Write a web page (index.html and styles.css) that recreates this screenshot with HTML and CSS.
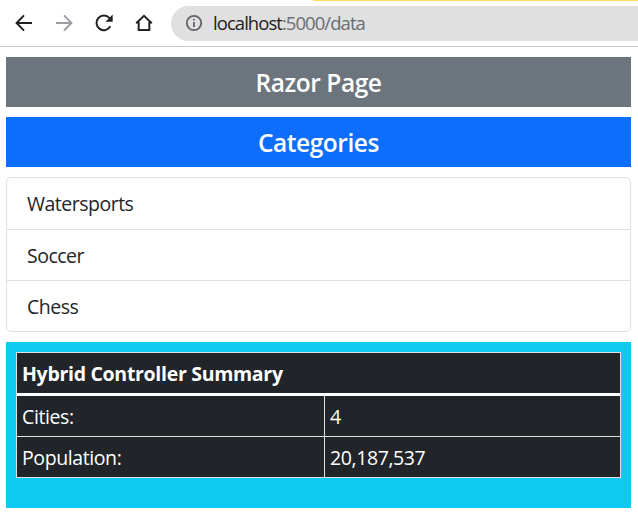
FILE: index.html
```html
<!DOCTYPE html>
<html lang="en">
<head>
<meta charset="utf-8">
<title>Razor Page</title>
<link rel="stylesheet" href="styles.css">
</head>
<body>
<header class="toolbar">
  <svg class="icon" viewBox="0 0 24 24"><path d="M20 12H5M12 4.4L4.6 12l7.4 7.6"/></svg>
  <svg class="icon muted" viewBox="0 0 24 24"><path d="M4 12h15M12 4.4l7.4 7.6-7.4 7.6"/></svg>
  <svg class="icon" viewBox="0 0 24 24"><path d="M18.3 15.2A7.3 7.3 0 1 1 17.4 7.2"/><path class="solid" d="M20.7 3.5v7.2h-7.2z"/></svg>
  <svg class="icon" viewBox="0 0 24 24"><path d="M4.2 12.2L12 4.8l7.8 7.4M6.7 11v8.1h10.6V11"/></svg>
  <div class="address">
    <svg class="info" viewBox="0 0 18 18"><circle cx="9" cy="9" r="7.2"/><path d="M9 8v5M9 4.8v1.8"/></svg>
    <span class="url">localhost<span class="path">:5000/data</span></span>
  </div>
  <div class="tab-line"></div>
</header>
<main>
  <h4 class="banner secondary">Razor Page</h4>
  <h4 class="banner primary">Categories</h4>
  <ul class="list">
    <li>Watersports</li>
    <li>Soccer</li>
    <li>Chess</li>
  </ul>
  <section class="summary">
    <table>
      <colgroup><col class="label-col"><col></colgroup>
      <thead><tr><th colspan="2">Hybrid Controller Summary</th></tr></thead>
      <tbody>
        <tr><td>Cities:</td><td>4</td></tr>
        <tr><td>Population:</td><td>20,187,537</td></tr>
      </tbody>
    </table>
  </section>
</main>
</body>
</html>
```
FILE: styles.css
```css
* { box-sizing: border-box; }
body {
  margin: 0;
  background: #fff;
  color: #212529;
  font: 19.5px/30px "Open Sans", "Noto Sans", sans-serif;
  overflow: hidden;
}
.toolbar {
  position: relative;
  display: flex;
  align-items: center;
  gap: 16px;
  height: 47px;
  padding-left: 12px;
  border-bottom: 1px solid #c8c8c8;
}
.icon { width: 24px; height: 24px; flex: none; fill: none; stroke: #202124; stroke-width: 2; }
.icon.muted { stroke: #9c9da0; }
.icon .solid { fill: #202124; stroke: none; }
.address {
  display: flex;
  align-items: center;
  flex: 1;
  height: 35px;
  margin-left: -1px;
  padding-left: 14px;
  border-radius: 18px 0 0 18px;
  background: #e0e0e0;
}
.info { width: 18px; height: 18px; margin-right: 10px; fill: none; stroke: #5f6368; stroke-width: 1.8; }
.url { font-size: 18.5px; line-height: 34px; letter-spacing: -0.95px; color: #202124; }
.path { color: #6a6d71; }
.tab-line { position: absolute; top: 0; left: 313px; right: 0; height: 1px; background: #ffdc5c; }
main { padding: 10px 7px 0 6px; }
.banner {
  height: 50px;
  margin: 0 0 10px;
  padding: 10px;
  font-size: 24.5px;
  line-height: 31px;
  font-weight: 600;
  letter-spacing: -0.45px;
  text-align: center;
  color: #fff;
}
.secondary { background: #6c757d; }
.primary { background: #0d6efd; }
.list {
  margin: 0 0 10px;
  padding: 0;
  list-style: none;
  border: 1px solid #dfdfdf;
  border-radius: 5px;
}
.list li { height: 51px; padding: 11px 20px 0; letter-spacing: -0.5px; }
.list li:first-child { height: 52px; }
.list li:not(:last-child) { border-bottom: 1px solid #dfdfdf; }
.list li:last-child { height: 50px; }
.summary { height: 166px; padding: 10px; background: #0dcaf0; }
table {
  width: 605px;
  border-collapse: separate;
  border-spacing: 0;
  table-layout: fixed;
  background: #212529;
  color: #fff;
  border: 1px solid #dfe0e1;
  border-bottom: 0;
}
.label-col { width: 308px; }
th, td { height: 41px; padding: 2px 5px 0; text-align: left; border-bottom: 1px solid #dfe0e1; letter-spacing: -0.4px; }
th { height: 43px; border-bottom: 3px solid #fff; font-weight: 700; letter-spacing: -0.3px; }
td:first-child { border-right: 1px solid #dfe0e1; }
```
